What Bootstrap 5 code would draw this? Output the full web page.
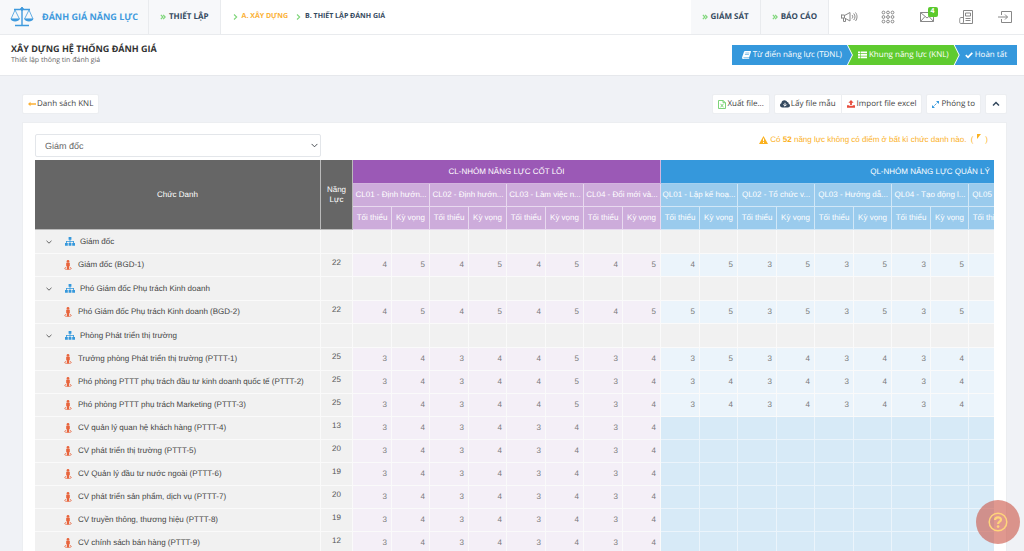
<!DOCTYPE html>
<html lang="vi">
<head>
<meta charset="utf-8">
<meta name="viewport" content="width=device-width, initial-scale=1">
<title>Xây dựng hệ thống đánh giá</title>
<link href="https://cdn.jsdelivr.net/npm/bootstrap@5.3.0/dist/css/bootstrap.min.css" rel="stylesheet">
<style>
  body { font-family: "Open Sans", sans-serif; font-size: 8px; line-height: 12px; background: #f0f2f6; color: #444; text-rendering: geometricPrecision; }
  button, select { text-rendering: inherit; }
  a { text-decoration: none; color: inherit; }
  svg { flex: none; display: block; fill: currentColor; }
  .line-icon { fill: none; stroke: #888; stroke-width: 1; }

  .topbar { height: 35px; border-bottom: 1px solid #e9ebee; }
  .topbar .tab { background: #f7f8fa; border-right: 1px solid #e9ebee; color: #34495e; font-size: 8px; font-weight: 700; padding: 0 11px; gap: 3px; }
  .topbar .brand { color: #3f9add; font-size: 9px; gap: 8px; padding: 0 10px; }
  .topbar .arrows { color: #7fd67a; }
  .crumb { font-size: 7px; font-weight: 700; color: #34495e; gap: 4px; }
  .crumb svg { color: #7fd67a; }
  .crumb .current { color: #fbb034; }
  .tool { width: 39px; }
  .mail-count { position: absolute; top: -5px; right: -4px; width: 10px; height: 10px; font-size: 7px; line-height: 10px; background: #5bc92d; color: #fff; border-radius: 2px; text-align: center; font-weight: 700; }

  .page-head { height: 41px; border-bottom: 1px solid #e6e8ec; padding: 0 7px 0 11px; }
  .page-head h1 { font-size: 9px; line-height: 12px; font-weight: 700; margin: 0; color: #333; }
  .page-head p { font-size: 7px; line-height: 12px; margin: 0; color: #666; }

  .step { height: 20px; color: #fff; background: #3598dc; font-size: 8px; gap: 2px; margin-left: -4px; padding: 0 10px; }
  .step-first { clip-path: polygon(0 0, calc(100% - 5px) 0, 100% 50%, calc(100% - 5px) 100%, 0 100%); }
  .step-mid { background: #5fcb2f; clip-path: polygon(0 0, calc(100% - 5px) 0, 100% 50%, calc(100% - 5px) 100%, 0 100%, 5px 50%); }
  .step-last { clip-path: polygon(0 0, 100% 0, 100% 100%, 0 100%, 5px 50%); }

  .content { padding: 18px 17px 0 22px; }
  .tool-btn { --bs-btn-font-size: 8px; --bs-btn-line-height: 12px; --bs-btn-padding-x: 5px; --bs-btn-padding-y: 2px; --bs-btn-border-radius: 2px; --bs-btn-color: #444; --bs-btn-bg: #fff; --bs-btn-border-color: #eceef1; height: 20px; }
  .collapse-btn { --bs-btn-padding-x: 6px; }
  .panel { background: #fff; border: 1px solid #eceef1; margin-top: 8px; padding: 11px 12px 20px; }
  .panel, .panel select { font-family: "Liberation Sans", Arial, sans-serif; }
  .role-select { width: 286px; height: 23px; font-size: 9px; line-height: 14px; padding: 3px 20px 3px 9px; border-color: #e3e6ea; border-radius: 2px; color: #666; background-size: 7px 7px; background-position: right 2px center; }
  .warn { color: #fbb11f; font-size: 8px; padding-right: 6px; gap: 2px; }

  .grid-wrap { overflow: hidden; margin-top: 3px; }
  .matrix { table-layout: fixed; width: 1165px; border-collapse: separate; border-spacing: 0; font-size: 8px; line-height: 10px; }
  .matrix th, .matrix td { padding: 0; white-space: nowrap; vertical-align: middle; border-right: 1px solid #fafafa; border-bottom: 1px solid #fafafa; }
  .matrix thead th { color: #fff; font-weight: 400; text-align: center; border-color: rgba(255,255,255,.55); }
  .matrix thead tr { height: 23px; }
  .matrix thead tr:first-child { height: 24px; }
  .matrix .dark { background: #666; }
  .matrix .cl { background: #9b59b6; }
  .matrix .ql { background: #3598dc; }
  .matrix .cl-sub { background: #cdacdb; }
  .matrix .ql-sub { background: #9acbed; }
  .matrix tbody tr { height: 23px; }
  .matrix tbody tr.unit { height: 24px; }
  .matrix tbody th { font-weight: 400; background: #f1f1f1; color: #444; }
  .matrix tbody td { background: #f1f1f1; color: #777; text-align: right; padding-right: 4px; }
  .matrix tbody td.total { color: #555; text-align: center; padding: 0 0 4px; }
  .matrix tbody td.v-cl { background: #f4eff7; }
  .matrix tbody td.v-ql { background: #ebf4fb; }
  .matrix tbody td.v-none { background: #d7eaf7; border-color: #ebf4fb; }
  .unit-name { padding-left: 10px; }
  .unit-name .org { margin: 0 5px 0 12px; color: #3598dc; }
  .role-name { padding-left: 29px; gap: 6px; }
  .role-name svg { color: #e8643c; }

  .help { position: fixed; right: 4px; bottom: 7px; width: 44px; height: 44px; border: 0; border-radius: 50%; background: rgba(203,83,68,.6); color: #ffd57a; }
</style>
</head>
<body class="vh-100 overflow-hidden">

<svg width="0" height="0" class="position-absolute" aria-hidden="true">
  <symbol id="i-dbl" viewBox="0 0 7 7"><path d="M1 1l2.300 2.500L1 6M3.700 1L6 3.500 3.700 6" fill="none" stroke="currentColor" stroke-width="1.400"/></symbol>
  <symbol id="i-right" viewBox="0 0 5 8"><path d="M1 1.500L3.700 4 1 6.500" fill="none" stroke="currentColor" stroke-width="1.100"/></symbol>
  <symbol id="i-down" viewBox="0 0 8 8"><path d="M1.500 2.800L4 5.200l2.500-2.400" fill="none" stroke="#666" stroke-width="1"/></symbol>
  <symbol id="i-org" viewBox="0 0 10 9"><path d="M3.600 0h2.800v2.700H5.400v1.200H9v2.100h1v2.700H7.200V6h1V4.700H5.400V6h1v2.700H3.600V6h1V4.700H1.800V6h1v2.700H0V6h1V3.900h3.600V2.700h-1z"/></symbol>
  <symbol id="i-person" viewBox="0 0 8 10"><circle cx="4" cy="1.400" r="1.400"/><path d="M2.200 2.800h3.600v3.400h-.7V9H2.900V6.200h-.7z"/><path d="M2.200 7.400C-.4 8 .3 9.500 4 9.500s4.400-1.500 1.800-2.100" fill="none" stroke="currentColor" stroke-width=".8"/></symbol>
</svg>

<header class="topbar bg-white d-flex align-items-stretch">
  <a href="#" class="tab brand d-flex align-items-center">
    <svg class="line-icon" width="24" height="22" viewBox="0 0 24 22" style="stroke:#3f9add"><path d="M12 1v18M4 3.500h16M5 19.500h14" stroke-width="1.400"/><circle cx="12" cy="3" r="1.300" fill="#3f9add"/><path d="M5 4L1 13h8.500zM19 4l-4.500 9H23z" stroke-width=".8"/><path d="M.6 12.800h9c-.6 3.600-8.400 3.600-9 0zM14.400 12.800h9c-.6 3.600-8.400 3.600-9 0z" fill="#3f9add" stroke="none"/></svg>
    <span>ĐÁNH GIÁ NĂNG LỰC</span>
  </a>
  <a href="#" class="tab d-flex align-items-center"><svg class="arrows" width="6" height="6"><use href="#i-dbl"/></svg>THIẾT LẬP</a>
  <nav class="d-flex align-items-center gap-2 ps-2 ms-1" aria-label="Đường dẫn">
    <a href="#" class="crumb d-flex align-items-center"><svg width="5" height="8"><use href="#i-right"/></svg><span class="current">A. XÂY DỰNG</span></a>
    <a href="#" class="crumb d-flex align-items-center"><svg width="5" height="8"><use href="#i-right"/></svg><span>B. THIẾT LẬP ĐÁNH GIÁ</span></a>
  </nav>
  <div class="d-flex ms-auto">
    <a href="#" class="tab d-flex align-items-center"><svg class="arrows" width="6" height="6"><use href="#i-dbl"/></svg>GIÁM SÁT</a>
    <a href="#" class="tab d-flex align-items-center"><svg class="arrows" width="6" height="6"><use href="#i-dbl"/></svg>BÁO CÁO</a>
    <a href="#" class="tool d-flex align-items-center justify-content-center" aria-label="Thông báo"><svg class="line-icon" width="18" height="14" viewBox="0 0 18 14"><path d="M1.500 4.500v4M1.500 5h3v3h-3M4.500 5.500L10 2.500v8.500l-5.500-3M3.500 8v3.500h2V8.500M12 5c1 1 1 2.500 0 3.500M13.700 3.500c1.700 2 1.700 4.500 0 6.500M15.500 2.500c2 2.500 2 6 0 8.500"/></svg></a>
    <a href="#" class="tool d-flex align-items-center justify-content-center" aria-label="Ứng dụng"><svg class="line-icon" width="14" height="14" viewBox="0 0 14 14"><g id="dots"><circle cx="2.500" cy="2.500" r="1.400"/><circle cx="7" cy="2.500" r="1.400"/><circle cx="11.500" cy="2.500" r="1.400"/></g><use href="#dots" y="4.500"/><use href="#dots" y="9"/></svg></a>
    <a href="#" class="tool d-flex align-items-center justify-content-center" aria-label="Thư"><span class="position-relative"><svg class="line-icon" width="14" height="10" viewBox="0 0 14 10"><path d="M.5.5h13v9H.5zM.5.5L7 6l6.500-5.500M.5 9.500L5 4.500M13.500 9.500L9 4.500"/></svg><span class="mail-count">4</span></span></a>
    <a href="#" class="tool d-flex align-items-center justify-content-center" aria-label="Tin tức"><svg class="line-icon" width="14" height="14" viewBox="0 0 14 14"><path d="M4.500.5h9v13h-12c-1.300 0-1-6 0-6h3zM4.500 7v5c0 1-1 1.500-2 1.500M6.500 3h5v3h-5zM6.500 8.500h5M6.500 10.500h5"/></svg></a>
    <a href="#" class="tool d-flex align-items-center justify-content-center" aria-label="Thoát"><svg class="line-icon" width="14" height="12" viewBox="0 0 14 12"><path d="M3.500 4V.5h10v11h-10V8M0 6h9.500M7 3.500L9.500 6 7 8.500"/></svg></a>
  </div>
</header>

<section class="page-head bg-white d-flex align-items-center justify-content-between">
  <div>
    <h1>XÂY DỰNG HỆ THỐNG ĐÁNH GIÁ</h1>
    <p>Thiết lập thông tin đánh giá</p>
  </div>
  <nav class="d-flex" aria-label="Các bước">
    <a href="#" class="step step-first d-flex align-items-center"><svg width="9" height="8" viewBox="0 0 9 8"><path d="M3 0h5.500c.5 0 .6.500.4.900L7.300 6c-.1.400-.4.500-.8.500H1.800c-.5 0-.5.700 0 .7h5.400V8H1.400C.2 8-.1 7 .2 6L2 .8C2.200.3 2.500 0 3 0z"/><path d="M3.300 2h4M2.900 3.500h4" stroke="#3598dc" stroke-width=".6"/></svg>Từ điển năng lực (TĐNL)</a>
    <a href="#" class="step step-mid d-flex align-items-center"><svg width="9" height="8" viewBox="0 0 9 8"><path d="M0 .5h2v1.800H0zM2.600.5H9v1.800H2.600zM0 3h2v1.800H0zM2.600 3H9v1.800H2.600zM0 5.500h2v1.800H0zM2.600 5.500H9v1.800H2.600z"/></svg>Khung năng lực (KNL)</a>
    <a href="#" class="step step-last d-flex align-items-center"><svg width="8" height="8" viewBox="0 0 8 8"><path d="M.8 4.200L3 6.300 7.300 1.800" fill="none" stroke="#fff" stroke-width="1.700"/></svg>Hoàn tất</a>
  </nav>
</section>

<main class="content">
  <div class="d-flex justify-content-between">
    <a href="#" class="btn tool-btn d-flex align-items-center"><svg style="color:#fbb034" width="9" height="6" viewBox="0 0 9 6"><path d="M0 3l2.500-2.200v1.500H8v1.500H2.500v1.500z"/></svg>Danh sách KNL</a>
    <div class="d-flex gap-1">
      <button type="button" class="btn tool-btn d-flex align-items-center"><svg width="9" height="9" viewBox="0 0 9 9" style="color:#6fcf6a"><path d="M.5.500h4.500l2.500 2.200v5.800h-7zM5 .5v2.200h2.500M2.500 3.800l3 3.500M5.500 3.800l-3 3.500" fill="none" stroke="currentColor" stroke-width=".9"/></svg>Xuất file...</button>
      <div class="btn-group">
        <button type="button" class="btn tool-btn d-flex align-items-center"><svg width="11" height="8" viewBox="0 0 11 8" style="color:#34495e"><path d="M2.500 7.500C.8 7.500 0 6.500 0 5.300c0-1 .6-1.700 1.400-2C1.400 1.500 2.800.3 4.400.3c1.300 0 2.300.7 2.800 1.800 1 0 1.600.8 1.400 1.700.9.200 1.400.900 1.400 1.700 0 1.200-.9 2-2.100 2z"/><path d="M5 2.800v3M3.300 4.500L5 6.200l1.700-1.700" fill="none" stroke="#fff"/></svg>Lấy file mẫu</button>
        <button type="button" class="btn tool-btn d-flex align-items-center"><svg width="10" height="8" viewBox="0 0 10 8" style="color:#e74c3c"><path d="M4 0l2.600 2.700H4.900v2.600H3.100V2.700H1.400zM0 5.200h2.400v.9h3.200v-.9H8v2.500H0z"/></svg>Import file excel</button>
      </div>
      <button type="button" class="btn tool-btn d-flex align-items-center"><svg width="9" height="7" viewBox="0 0 9 7" style="color:#3598dc"><path d="M4 0h3v3zM0 4l3 3H0z"/><path d="M1.500 5.500l4-4" stroke="currentColor" stroke-dasharray="1.500 .8"/></svg>Phóng to</button>
      <button type="button" class="btn tool-btn collapse-btn d-flex align-items-center" aria-label="Thu gọn"><svg width="8" height="8" viewBox="0 0 8 8"><path d="M1 5.500l3-3 3 3" fill="none" stroke="#34495e" stroke-width="1.500"/></svg></button>
    </div>
  </div>

  <section class="panel">
    <div class="d-flex justify-content-between align-items-start">
      <select class="form-select role-select" aria-label="Chức danh"><option>Giám đốc</option></select>
      <div class="warn d-flex align-items-center"><svg width="9" height="8" viewBox="0 0 9 8"><path d="M4.500 0L9 8H0z"/><path d="M4.500 2.500v2.700M4.500 6v1" stroke="#fff"/></svg><span>Có <b>52</b> năng lực không có điểm ở bất kì chức danh nào.</span><span class="d-flex">&nbsp;(<svg class="mx-1" width="4" height="5" viewBox="0 0 4 5"><path d="M0 0h4L0 5z"/></svg>)</span></div>
    </div>
    <div class="grid-wrap">
      <table class="matrix">
        <colgroup id="cols"><col style="width:286px"><col style="width:32px"></colgroup>
        <thead>
          <tr><th rowspan="3" class="dark">Chức Danh</th><th rowspan="3" class="dark">Năng<br>Lực</th><th colspan="8" class="cl">CL-NHÓM NĂNG LỰC CỐT LÕI</th><th colspan="14" class="ql">QL-NHÓM NĂNG LỰC QUẢN LÝ</th></tr>
          <tr id="skills"></tr>
          <tr id="levels"></tr>
        </thead>
        <tbody id="rows"></tbody>
      </table>
    </div>
  </section>
</main>

<button type="button" class="help d-flex align-items-center justify-content-center" aria-label="Trợ giúp"><svg width="20" height="20" viewBox="0 0 20 20"><g fill="none" stroke="currentColor"><circle cx="10" cy="10" r="8.800" stroke-width="1.500"/><path d="M7 8c.2-3.600 6-3.400 6-.3 0 2-2.900 2-2.900 4.200" stroke-width="2.200"/></g><circle cx="10.100" cy="14.600" r="1.300"/></svg></button>

<script src="https://cdn.jsdelivr.net/npm/bootstrap@5.3.0/dist/js/bootstrap.bundle.min.js"></script>
<script>
  const skills = ['CL01 - Định hướn...', 'CL02 - Định hướn...', 'CL03 - Làm việc n...', 'CL04 - Đổi mới và...',
    'QL01 - Lập kế hoạ...', 'QL02 - Tổ chức v...', 'QL03 - Hướng dẫ...', 'QL04 - Tạo động l...', 'QL05 - Giải quyết...', '', ''];
  const low = '34343434';
  // [name, total, CL scores, QL scores]; a single entry is an organisation unit
  const rows = [
    ['Giám đốc'],
    ['Giám đốc (BGD-1)', 22, '45454545', '45353535'],
    ['Phó Giám đốc Phụ trách Kinh doanh'],
    ['Phó Giám đốc Phụ trách Kinh doanh (BGD-2)', 22, '45454545', '55353535'],
    ['Phòng Phát triển thị trường'],
    ['Trưởng phòng Phát triển thị trường (PTTT-1)', 25, '34344534', '35343434'],
    ['Phó phòng PTTT phụ trách đầu tư kinh doanh quốc tế (PTTT-2)', 25, '34344534', low],
    ['Phó phòng PTTT phụ trách Marketing (PTTT-3)', 25, '34344534', low],
    ['CV quản lý quan hệ khách hàng (PTTT-4)', 13, low],
    ['CV phát triển thị trường (PTTT-5)', 20, low],
    ['CV Quản lý đầu tư nước ngoài (PTTT-6)', 19, low],
    ['CV phát triển sản phẩm, dịch vụ (PTTT-7)', 20, low],
    ['CV truyền thông, thương hiệu (PTTT-8)', 19, low],
    ['CV chính sách bán hàng (PTTT-9)', 12, low]
  ];
  const icon = (id, w, h, c = '') => `<svg class="${c}" width="${w}" height="${h}"><use href="#${id}"/></svg>`;
  const group = i => i < 4 ? 'cl' : 'ql';
  cols.insertAdjacentHTML('beforeend', skills.map(() => '<col style="width:39px"><col style="width:38px">').join(''));
  document.getElementById('skills').innerHTML = skills.map((s, i) => `<th colspan="2" class="${group(i)}-sub">${s}</th>`).join('');
  // the two last competences have no name and no level labels yet
  levels.innerHTML = skills.map((s, i) => `<th class="${group(i)}-sub">${s && 'Tối thiểu'}</th><th class="${group(i)}-sub">${i < 8 ? 'Kỳ vọng' : ''}</th>`).join('');
  document.getElementById('rows').innerHTML = rows.map(([name, total, cl, ql]) => {
    if (total === undefined) {
      return `<tr class="unit"><th><div class="unit-name d-flex align-items-center">${icon('i-down', 8, 8)}${icon('i-org', 10, 9, 'org')}${name}</div></th>${'<td></td>'.repeat(23)}</tr>`;
    }
    let cells = '';
    for (let i = 0; i < 8; i++) cells += `<td class="v-cl">${cl[i]}</td>`;
    for (let i = 0; i < 14; i++) cells += ql ? `<td class="v-ql">${ql[i] || ''}</td>` : '<td class="v-none"></td>';
    return `<tr><th><div class="role-name d-flex align-items-center">${icon('i-person', 8, 10)}${name}</div></th><td class="total">${total}</td>${cells}</tr>`;
  }).join('');
</script>
</body>
</html>
